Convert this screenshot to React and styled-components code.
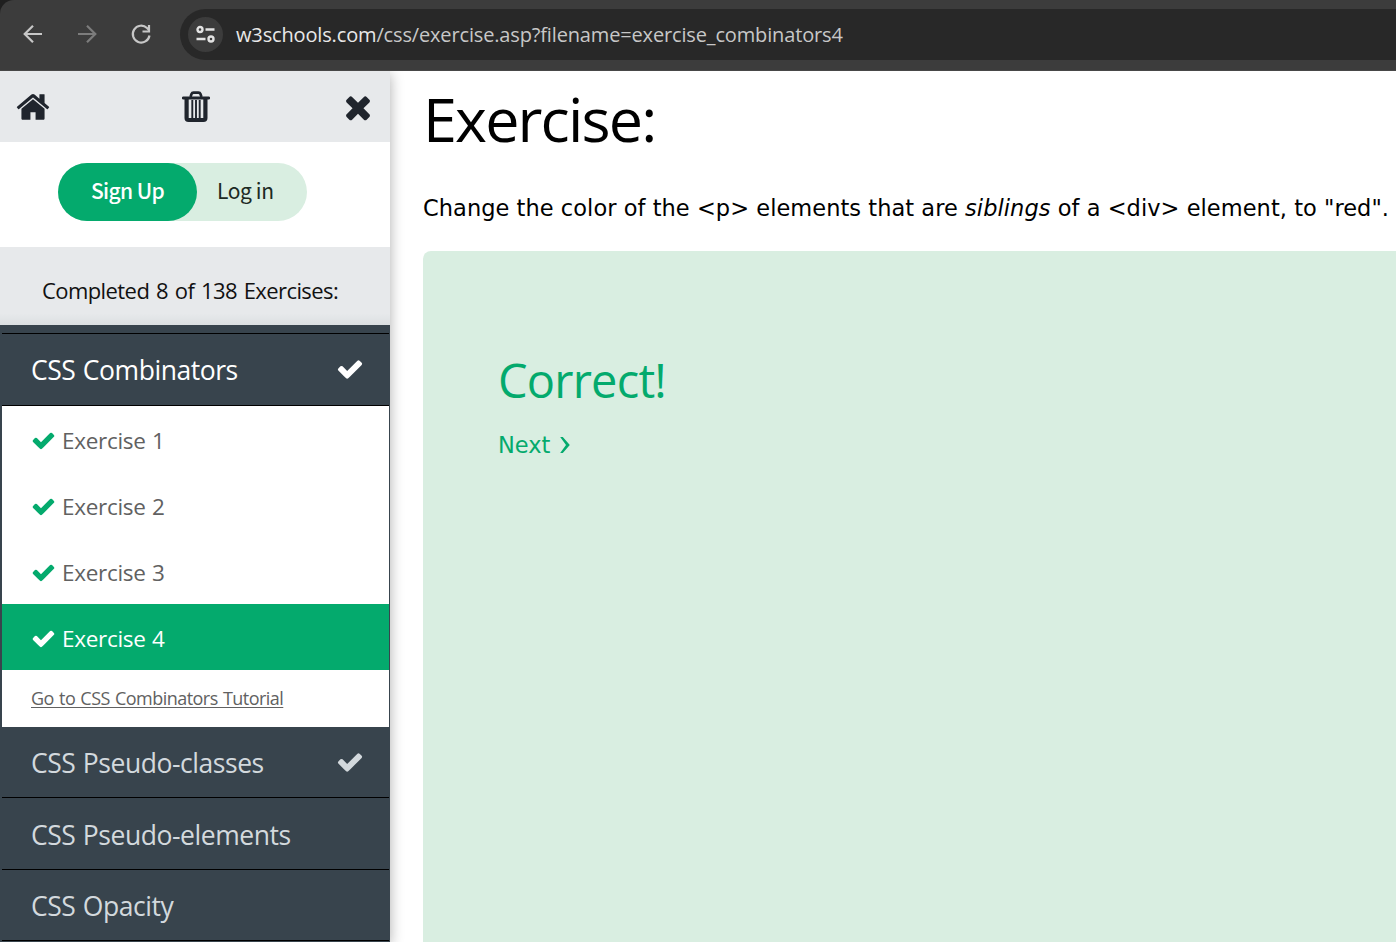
import React from 'react';
import styled, { createGlobalStyle } from 'styled-components';

const segoe = '"Open Sans", "Noto Sans", sans-serif';
const verdana = '"DejaVu Sans", sans-serif';
const source = '"Noto Sans CJK SC", sans-serif';

const GlobalStyle = createGlobalStyle`
  *, *::before, *::after { box-sizing: border-box; }
  body { margin: 0; background: #fff; overflow: hidden; font-family: ${segoe}; }
  p, h1, h2 { margin: 0; font-weight: 400; }
  svg { display: block; flex: none; }
`;

const Page = styled.div`
  width: 100vw;
  height: 942px;
  display: flex;
  flex-direction: column;
  overflow: hidden;
`;

const WindowFrame = styled.div`
  flex: none;
  background: #1f1f1f;
`;

const BrowserBar = styled.header`
  height: 71px;
  display: flex;
  align-items: center;
  padding: 0 0 2px 20px;
  background: #3c3c3c;
  border-top-left-radius: 14px;
  border-bottom: 1px solid #474747;
`;

const NavButtons = styled.nav`
  display: flex;
  gap: 28px;
  width: 160px;
`;

const AddressBar = styled.div`
  flex: 1;
  height: 51px;
  display: flex;
  align-items: center;
  gap: 12px;
  padding-left: 8px;
  background: #282828;
  border-radius: 26px 0 0 26px;
`;

const SiteInfo = styled.span`
  width: 35px;
  height: 35px;
  display: grid;
  place-items: center;
  border-radius: 50%;
  background: #3c3c3c;
`;

const Url = styled.span`
  padding: 2px 0 0 1px;
  font-size: 20px;
  line-height: 28px;
  letter-spacing: -0.15px;
  color: #c7c7c7;
  white-space: nowrap;
`;

const Host = styled.span`
  color: #e8e8e8;
`;

const Body = styled.div`
  flex: 1;
  display: flex;
  min-height: 0;
`;

const Sidebar = styled.aside`
  position: relative;
  flex: none;
  width: 390px;
  display: flex;
  flex-direction: column;
  background: #fff;
  box-shadow: 0 3px 13px rgba(0, 0, 0, 0.32);
  clip-path: inset(0 -30px 0 0);
`;

const Tools = styled.div`
  height: 71px;
  display: flex;
  align-items: center;
  justify-content: space-between;
  padding: 0 14px 0 15px;
  background: #e7e9eb;
`;

const Account = styled.div`
  height: 105px;
  padding: 21px 0 0 58px;
`;

const Pill = styled.div`
  width: 249px;
  height: 58px;
  display: flex;
  border-radius: 29px;
  background: #d9eee1;
  font-family: ${source};
  font-size: 21px;
  line-height: 54px;
  letter-spacing: -0.4px;
`;

const SignUp = styled.span`
  width: 139px;
  border-radius: 29px;
  background: #04aa6d;
  color: #fff;
  font-weight: 500;
  letter-spacing: -0.6px;
  text-align: center;
`;

const LogIn = styled.span`
  padding-left: 20px;
  color: #1c2a24;
`;

const Progress = styled.div`
  height: 78px;
  padding: 27px 0 0 42px;
  background: linear-gradient(#e7e9eb 85%, #dce0e2);
  font-size: 22px;
  line-height: 32px;
  letter-spacing: -0.58px;
  word-spacing: 1.6px;
  color: #111;
  white-space: nowrap;
`;

const Menu = styled.div`
  flex: 1;
  padding: 8px 1px 0 2px;
  background: #38444d;
`;

const Topic = styled.div`
  height: ${(p) => p.$height}px;
  display: flex;
  align-items: center;
  justify-content: space-between;
  padding: ${(p) => (p.$active ? 0 : 2)}px 25px 0 29px;
  border-top: ${(p) => (p.$active ? '1px solid #000' : '0')};
  border-bottom: 1px solid #000;
  font-size: 26.5px;
  letter-spacing: -0.45px;
  word-spacing: 1px;
  color: ${(p) => (p.$active ? '#fff' : '#d3d9dd')};
  white-space: nowrap;

  svg { margin-top: -2px; }
`;

const ExerciseRow = styled.div`
  height: 66px;
  display: flex;
  align-items: center;
  gap: 6px;
  padding: 2px 0 0 29px;
  background: ${(p) => (p.$active ? '#04aa6d' : '#fff')};
  color: ${(p) => (p.$active ? '#fff' : '#616161')};
  font-size: 22.5px;
  letter-spacing: -0.3px;
  word-spacing: 1px;

  svg { color: ${(p) => (p.$active ? '#fff' : '#04aa6d')}; }
`;

const TutorialRow = styled.div`
  height: 57px;
  padding: 15px 0 0 29px;
  background: #fff;
`;

const TutorialLink = styled.span`
  font-size: 18px;
  line-height: 26px;
  letter-spacing: -0.53px;
  word-spacing: 1px;
  color: #616161;
  text-decoration: underline;
  text-decoration-thickness: 1px;
  text-underline-offset: 2px;
  white-space: nowrap;
`;

const Content = styled.main`
  flex: 1;
  min-width: 0;
  display: flex;
  flex-direction: column;
  padding-left: 33px;
`;

const Title = styled.h1`
  height: 116px;
  padding-top: 4px;
  font-size: 61px;
  line-height: 88px;
  letter-spacing: -1.85px;
`;

const Task = styled.p`
  height: 64px;
  font-family: ${verdana};
  font-size: 22.5px;
  line-height: 42px;
  letter-spacing: 0.045px;
  white-space: nowrap;
`;

const Result = styled.section`
  flex: 1;
  padding: 95px 0 0 75px;
  background: #d9eee1;
  border-top-left-radius: 8px;
  color: #04aa6d;
`;

const ResultTitle = styled.h2`
  font-size: 47px;
  line-height: 68px;
  letter-spacing: -0.8px;
`;

const NextLink = styled.div`
  display: flex;
  align-items: center;
  gap: 9px;
  height: 62px;
  font-family: ${verdana};
  font-size: 22.5px;
`;

const CheckIcon = ({ size }) => (
  <svg width={size} height={size} viewBox="0 0 1792 1792" fill="currentColor">
    <path d="M1671 566q0 40-28 68l-724 724-136 136q-28 28-68 28t-68-28l-136-136-362-362q-28-28-28-68t28-68l136-136q28-28 68-28t68 28l294 295 656-657q28-28 68-28t68 28l136 136q28 28 28 68z" />
  </svg>
);

const HomeIcon = () => (
  <svg width="36" height="36" viewBox="0 0 1792 1792" fill="#20252d">
    <path d="M1472 992v480q0 26-19 45t-45 19h-384v-384h-256v384h-384q-26 0-45-19t-19-45v-480q0-1 .5-3t.5-3l575-474 575 474q1 2 1 6zm223-69l-62 74q-8 9-21 11h-3q-13 0-21-7l-692-577-692 577q-12 8-24 7-13-2-21-11l-62-74q-8-10-7-23.5t11-21.5l719-599q32-26 76-26t76 26l244 204v-195q0-14 9-23t23-9h192q14 0 23 9t9 23v408l219 182q10 8 11 21.5t-7 23.5z" />
  </svg>
);

const TrashIcon = () => (
  <svg width="28" height="32" viewBox="0 0 28 32" fill="none" stroke="#20252d">
    <path d="M1.200 7h25.600" strokeWidth="2.800" strokeLinecap="round" />
    <path d="M8.500 6l1-3Q10 1.600 11.500 1.600h5q1.500 0 2 1.400l1 3" strokeWidth="2.600" />
    <path d="M4.600 7v20q0 2 2 2h14.800q2 0 2-2V7" strokeWidth="4.200" />
    <path d="M10.300 9v18M14 9v18M17.700 9v18" strokeWidth="1.900" />
  </svg>
);

const CloseIcon = () => (
  <svg width="36" height="36" viewBox="0 0 1792 1792" fill="#20252d">
    <path d="M1490 1322q0 40-28 68l-136 136q-28 28-68 28t-68-28l-294-294-294 294q-28 28-68 28t-68-28l-136-136q-28-28-28-68t28-68l294-294-294-294q-28-28-28-68t28-68l136-136q28-28 68-28t68 28l294 294 294-294q28-28 68-28t68 28l136 136q28 28 28 68t-28 68l-294 294 294 294q28 28 28 68z" />
  </svg>
);

const Arrow = ({ color, flip }) => (
  <svg width="26" height="26" viewBox="0 0 26 26" fill="none" stroke={color} strokeWidth="2.200">
    <path d={flip ? 'M4 13h17M13 4.700l8.300 8.300-8.300 8.300' : 'M22 13H5M13 4.700L4.700 13l8.300 8.300'} />
  </svg>
);

const Reload = () => (
  <svg width="26" height="26" viewBox="0 0 26 26" fill="none" stroke="#c7c7c7" strokeWidth="2.200">
    <path d="M21.500 14.500A8.400 8.400 0 1 1 19 7l2 2" />
    <path d="M21 4v6.500h-6.500" />
  </svg>
);

const Tune = () => (
  <svg width="21" height="19" viewBox="0 0 21 19" fill="none" stroke="#e3e3e3" strokeWidth="2.400">
    <circle cx="5" cy="4.500" r="2.500" />
    <path d="M10.500 4.500h9M1.500 14h9" />
    <circle cx="16" cy="14" r="2.500" />
  </svg>
);

const Chevron = () => (
  <svg width="12" height="18" viewBox="0 0 12 18" fill="currentColor">
    <path d="M1.200 1h2.600L10.800 9l-7 8H1.200L7 9z" />
  </svg>
);

const exercises = ['Exercise 1', 'Exercise 2', 'Exercise 3', 'Exercise 4'];

export default function App() {
  return (
    <Page>
      <GlobalStyle />
      <WindowFrame>
        <BrowserBar>
          <NavButtons>
            <Arrow color="#c7c7c7" />
            <Arrow color="#7c7c7c" flip />
            <Reload />
          </NavButtons>
          <AddressBar>
            <SiteInfo><Tune /></SiteInfo>
            <Url><Host>w3schools.com</Host>/css/exercise.asp?filename=exercise_combinators4</Url>
          </AddressBar>
        </BrowserBar>
      </WindowFrame>
      <Body>
        <Sidebar>
          <Tools>
            <HomeIcon />
            <TrashIcon />
            <CloseIcon />
          </Tools>
          <Account>
            <Pill>
              <SignUp>Sign Up</SignUp>
              <LogIn>Log in</LogIn>
            </Pill>
          </Account>
          <Progress>Completed 8 of 138 Exercises:</Progress>
          <Menu>
            <Topic $active $height={73}>CSS Combinators<CheckIcon size={28} /></Topic>
            {exercises.map((name, i) => (
              <ExerciseRow key={name} $active={i === 3}>
                <CheckIcon size={25} />
                {name}
              </ExerciseRow>
            ))}
            <TutorialRow><TutorialLink>Go to CSS Combinators Tutorial</TutorialLink></TutorialRow>
            <Topic $height={71}>CSS Pseudo-classes<CheckIcon size={28} /></Topic>
            <Topic $height={72}>CSS Pseudo-elements</Topic>
            <Topic $height={71}>CSS Opacity</Topic>
          </Menu>
        </Sidebar>
        <Content>
          <Title>Exercise:</Title>
          <Task>
            Change the color of the &lt;p&gt; elements that are <em>siblings</em> of a &lt;div&gt; element, to "red".
          </Task>
          <Result>
            <ResultTitle>Correct!</ResultTitle>
            <NextLink>Next<Chevron /></NextLink>
          </Result>
        </Content>
      </Body>
    </Page>
  );
}
